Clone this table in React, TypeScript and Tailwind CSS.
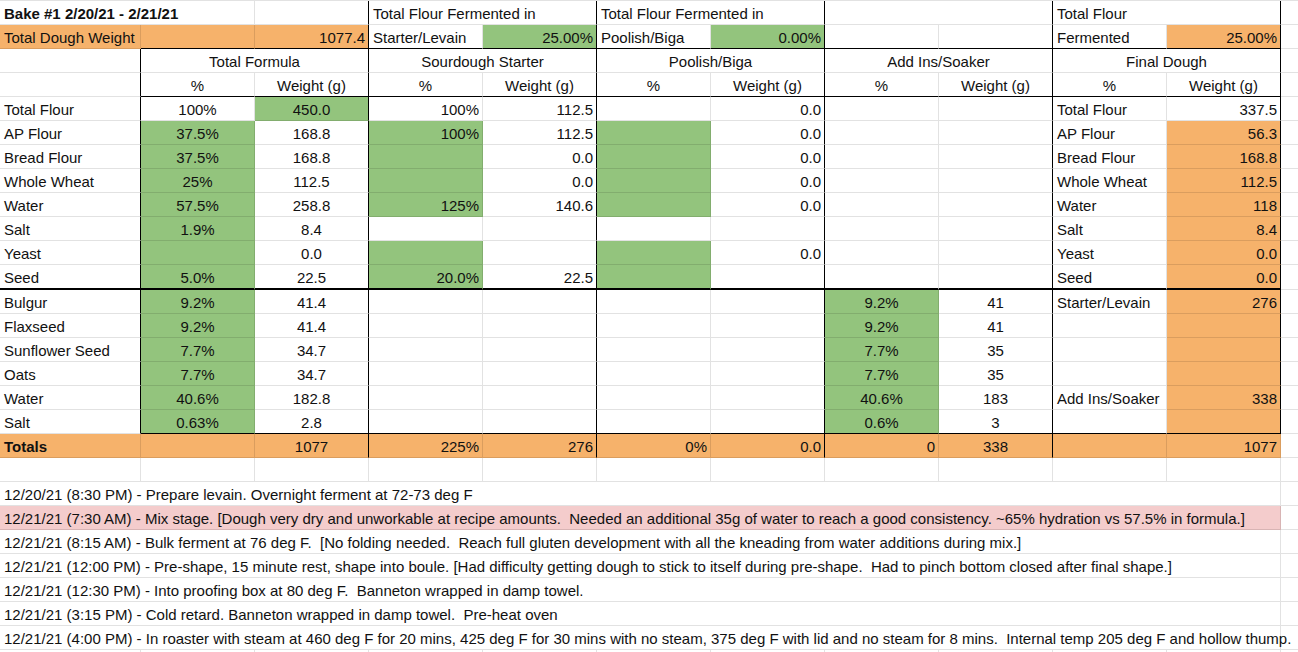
import React from 'react';

type Spec = {
  t?: string;
  s?: number;
  bg?: 'o' | 'g' | 'p';
  a?: 'l' | 'c' | 'r';
  b?: boolean;
  rb?: boolean;
  bb?: boolean;
};

const widthCls: Record<number, string> = {
  141: 'w-[141px]',
  114: 'w-[114px]',
  228: 'w-[228px]',
  255: 'w-[255px]',
  1281: 'w-[1281px]',
};

const bgCls = {
  o: 'bg-[#f6b26b]',
  g: 'bg-[#93c47d]',
  p: 'bg-[#f4cccc]',
};

const alignCls = {
  l: 'justify-start pl-[4px]',
  c: 'justify-center',
  r: 'justify-end pr-[3px]',
};

function Cell({ spec, col, thick }: { spec: Spec; col: number; thick?: boolean }) {
  const span = spec.s ?? 1;
  let w = 0;
  for (let i = col; i < col + span; i++) w += i === 0 ? 141 : 114;
  const border = thick
    ? 'border-b-2 border-b-black'
    : spec.bb
      ? 'border-b border-b-black'
      : 'border-b border-b-[#0000001d]';
  return (
    <div
      className={[
        'shrink-0 flex items-end whitespace-pre border-r',
        widthCls[w],
        spec.bg ? bgCls[spec.bg] : '',
        spec.rb ? 'border-r-black' : 'border-r-[#0000001d]',
        border,
        alignCls[spec.a ?? 'l'],
        spec.b ? 'font-bold' : '',
      ].join(' ')}
    >
      <span className="leading-[20px]">{spec.t}</span>
    </div>
  );
}

function Row({ cells, thick }: { cells: Spec[]; thick?: boolean }) {
  let col = 0;
  return (
    <div className={thick ? 'flex h-[25px]' : 'flex h-[24px]'}>
      {cells.map((c, i) => {
        const start = col;
        col += c.s ?? 1;
        return <Cell key={i} spec={c} col={start} thick={thick && start < 11} />;
      })}
      <div className="w-[17px] shrink-0 border-b border-b-[#0000001d]" />
    </div>
  );
}

// label, B, B green, C, C green, D, D green, E, F green, G, J, K, K orange
const topRows: [string, string, boolean, string, boolean, string, boolean, string, boolean, string, string, string, boolean][] = [
  ['Total Flour', '100%', false, '450.0', true, '100%', false, '112.5', false, '0.0', 'Total Flour', '337.5', false],
  ['AP Flour', '37.5%', true, '168.8', false, '100%', true, '112.5', true, '0.0', 'AP Flour', '56.3', true],
  ['Bread Flour', '37.5%', true, '168.8', false, '', true, '0.0', true, '0.0', 'Bread Flour', '168.8', true],
  ['Whole Wheat', '25%', true, '112.5', false, '', true, '0.0', true, '0.0', 'Whole Wheat', '112.5', true],
  ['Water', '57.5%', true, '258.8', false, '125%', true, '140.6', true, '0.0', 'Water', '118', true],
  ['Salt', '1.9%', true, '8.4', false, '', false, '', false, '', 'Salt', '8.4', true],
  ['Yeast', '', true, '0.0', false, '', true, '', true, '0.0', 'Yeast', '0.0', true],
  ['Seed', '5.0%', true, '22.5', false, '20.0%', true, '22.5', true, '', 'Seed', '0.0', true],
];

// label, B, C, H, I, J, K
const soakerRows = [
  ['Bulgur', '9.2%', '41.4', '9.2%', '41', 'Starter/Levain', '276'],
  ['Flaxseed', '9.2%', '41.4', '9.2%', '41', '', ''],
  ['Sunflower Seed', '7.7%', '34.7', '7.7%', '35', '', ''],
  ['Oats', '7.7%', '34.7', '7.7%', '35', '', ''],
  ['Water', '40.6%', '182.8', '40.6%', '183', 'Add Ins/Soaker', '338'],
  ['Salt', '0.63%', '2.8', '0.6%', '3', '', ''],
];

const notes: [string, boolean][] = [
  ['12/20/21 (8:30 PM) - Prepare levain. Overnight ferment at 72-73 deg F', false],
  ['12/21/21 (7:30 AM) - Mix stage. [Dough very dry and unworkable at recipe amounts.  Needed an additional 35g of water to reach a good consistency. ~65% hydration vs 57.5% in formula.]', true],
  ['12/21/21 (8:15 AM) - Bulk ferment at 76 deg F.  [No folding needed.  Reach full gluten development with all the kneading from water additions during mix.]', false],
  ['12/21/21 (12:00 PM) - Pre-shape, 15 minute rest, shape into boule. [Had difficulty getting dough to stick to itself during pre-shape.  Had to pinch bottom closed after final shape.]', false],
  ['12/21/21 (12:30 PM) - Into proofing box at 80 deg F.  Banneton wrapped in damp towel.', false],
  ['12/21/21 (3:15 PM) - Cold retard. Banneton wrapped in damp towel.  Pre-heat oven', false],
  ['12/21/21 (4:00 PM) - In roaster with steam at 460 deg F for 20 mins, 425 deg F for 30 mins with no steam, 375 deg F with lid and no steam for 8 mins.  Internal temp 205 deg F and hollow thump.', false],
];

const blank: Spec[] = Array.from({ length: 11 }, () => ({}));

export default function App() {
  const sections = ['Total Formula', 'Sourdough Starter', 'Poolish/Biga', 'Add Ins/Soaker', 'Final Dough'];

  return (
    <div className="w-[1298px] h-[652px] overflow-hidden bg-white border-t border-t-[#e2e2e2] font-['Liberation_Sans',Arial,sans-serif] text-[15px] text-[#111]">
      <Row
        cells={[
          { t: 'Bake #1 2/20/21 - 2/21/21', s: 2, b: true },
          { rb: true },
          { t: 'Total Flour Fermented in', s: 2, rb: true },
          { t: 'Total Flour Fermented in', s: 2, rb: true },
          { s: 2, rb: true },
          { t: 'Total Flour', s: 2, rb: true },
        ]}
      />
      <Row
        cells={[
          { t: 'Total Dough Weight', bg: 'o' },
          { bg: 'o', bb: true },
          { t: '1077.4', bg: 'o', a: 'r', rb: true, bb: true },
          { t: 'Starter/Levain', bb: true },
          { t: '25.00%', bg: 'g', a: 'r', rb: true, bb: true },
          { t: 'Poolish/Biga', bb: true },
          { t: '0.00%', bg: 'g', a: 'r', rb: true, bb: true },
          { bb: true },
          { rb: true, bb: true },
          { t: 'Fermented', bb: true },
          { t: '25.00%', bg: 'o', a: 'r', rb: true, bb: true },
        ]}
      />
      <Row cells={[{ rb: true }, ...sections.map((t) => ({ t, s: 2, a: 'c' as const, rb: true }))]} />
      <Row
        cells={[
          { rb: true },
          ...sections.flatMap(() => [
            { t: '%', a: 'c' as const, bb: true },
            { t: 'Weight (g)', a: 'c' as const, rb: true, bb: true },
          ]),
        ]}
      />
      {topRows.map((r, i) => (
        <Row
          key={r[0] + i}
          thick={i === topRows.length - 1}
          cells={[
            { t: r[0], rb: true },
            { t: r[1], a: 'c', bg: r[2] ? 'g' : undefined },
            { t: r[3], a: 'c', bg: r[4] ? 'g' : undefined, rb: true },
            { t: r[5], a: 'r', bg: r[6] ? 'g' : undefined },
            { t: r[7], a: 'r', rb: true },
            { a: 'r', bg: r[8] ? 'g' : undefined },
            { t: r[9], a: 'r', rb: true },
            {},
            { rb: true },
            { t: r[10] },
            { t: r[11], a: 'r', bg: r[12] ? 'o' : undefined, rb: true },
          ]}
        />
      ))}
      {soakerRows.map((r, i) => {
        const last = i === soakerRows.length - 1;
        return (
          <Row
            key={r[0] + i}
            cells={[
              { t: r[0], rb: true },
              { t: r[1], a: 'c', bg: 'g', bb: last },
              { t: r[2], a: 'c', rb: true, bb: last },
              { bb: last },
              { rb: true, bb: last },
              { bb: last },
              { rb: true, bb: last },
              { t: r[3], a: 'c', bg: 'g', bb: last },
              { t: r[4], a: 'c', rb: true, bb: last },
              { t: r[5], bb: last },
              { t: r[6], a: 'r', bg: 'o', rb: true, bb: last },
            ]}
          />
        );
      })}
      <Row
        cells={[
          { t: 'Totals', b: true, bg: 'o' },
          { bg: 'o' },
          { t: '1077', a: 'c', bg: 'o', rb: true },
          { t: '225%', a: 'r', bg: 'o' },
          { t: '276', a: 'r', bg: 'o', rb: true },
          { t: '0%', a: 'r', bg: 'o' },
          { t: '0.0', a: 'r', bg: 'o', rb: true },
          { t: '0', a: 'r', bg: 'o' },
          { t: '338', a: 'c', bg: 'o', rb: true },
          { bg: 'o' },
          { t: '1077', a: 'r', bg: 'o' },
        ]}
      />
      <Row cells={blank} />
      {notes.map(([t, pink], i) => (
        <Row key={i} cells={[{ t, s: 11, bg: pink ? 'p' : undefined }]} />
      ))}
      <Row cells={blank} />
    </div>
  );
}
